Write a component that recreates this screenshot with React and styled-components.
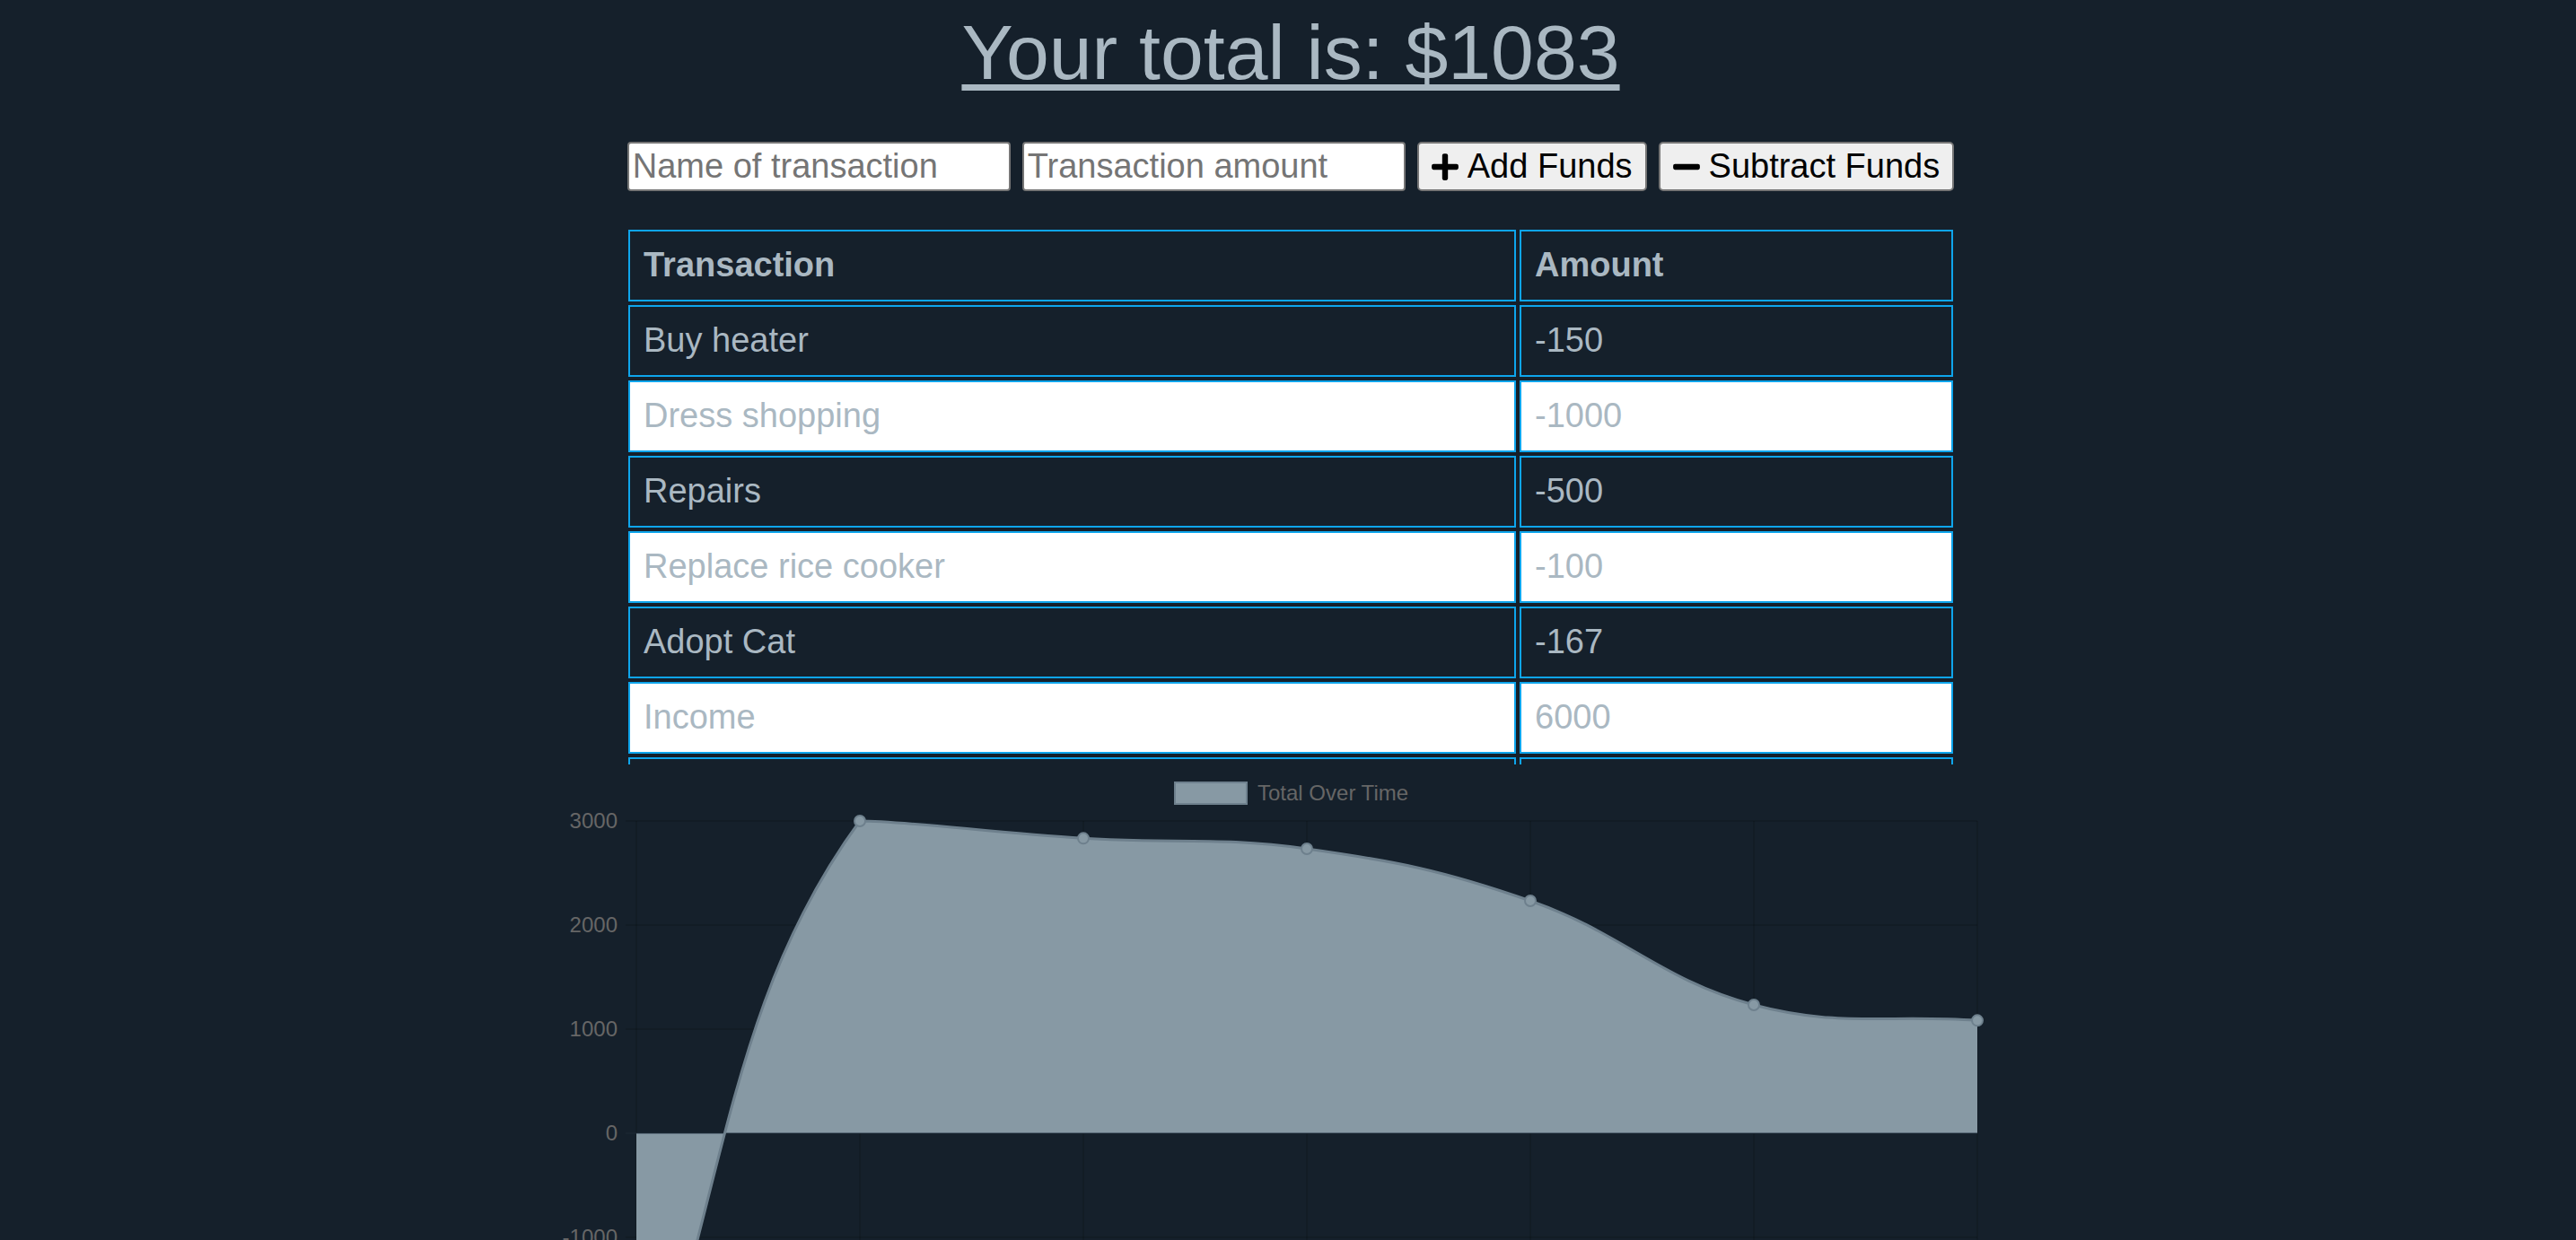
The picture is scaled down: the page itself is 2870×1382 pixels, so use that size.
import React from "react";
import styled, { createGlobalStyle } from "styled-components";
import { FaPlus, FaMinus } from "react-icons/fa";

const GlobalStyle = createGlobalStyle`
  html, body {
    margin: 0;
    padding: 0;
    background: #15202b;
    overflow: hidden;
    font-family: "Liberation Sans", Arial, Helvetica, sans-serif;
  }
`;

const Page = styled.div`
  display: flex;
  flex-direction: column;
  align-items: center;
  padding-left: 6px;
  box-sizing: border-box;
  width: 100%;
`;

const Title = styled.h1`
  margin: 0;
  padding-top: 8px;
  font-size: 86px;
  line-height: 100px;
  font-weight: normal;
  color: #aab8c2;
  text-decoration: underline;
  text-decoration-thickness: 7px;
  text-underline-offset: 6px;
`;

const Form = styled.div`
  display: flex;
  gap: 13px;
  margin-top: 50px;
`;

const Input = styled.input`
  box-sizing: border-box;
  width: 427px;
  height: 55px;
  margin: 0;
  padding: 0 4px;
  border: 2px solid #767676;
  border-radius: 4px;
  background: #ffffff;
  font-family: "Liberation Sans", Arial, sans-serif;
  font-size: 38px;
  color: #000;
  outline: none;
  &::placeholder {
    color: #757575;
  }
`;

const Button = styled.button`
  box-sizing: border-box;
  height: 55px;
  margin: 0;
  padding: 0 14px;
  display: flex;
  align-items: center;
  gap: 10px;
  border: 2px solid #767676;
  border-radius: 5px;
  background: #efefef;
  color: #000;
  font-family: "Liberation Sans", Arial, sans-serif;
  font-size: 38px;
  cursor: pointer;
  svg {
    width: 30px;
    height: 34px;
    flex: none;
  }
`;

const TableScroll = styled.div`
  margin-top: 39px;
  width: 1484px;
  height: 600px;
  overflow: hidden;
`;

const Grid = styled.div`
  display: grid;
  grid-template-columns: 989px 483px;
  gap: 4px;
  padding: 4px;
`;

const Cell = styled.div`
  box-sizing: border-box;
  height: 80px;
  padding: 15px 15px 17px;
  border: 2px solid #0ea5ec;
  background: ${(p) => (p.$light ? "#ffffff" : "#15202b")};
  color: #aab8c2;
  font-size: 38px;
  line-height: 44px;
  font-weight: ${(p) => (p.$head ? "bold" : "normal")};
  white-space: nowrap;
  overflow: hidden;
`;

const ChartBox = styled.div`
  width: 1630px;
  height: 800px;
  flex: none;
  svg {
    display: block;
  }
`;

const rows = [
  ["Buy heater", "-150"],
  ["Dress shopping", "-1000"],
  ["Repairs", "-500"],
  ["Replace rice cooker", "-100"],
  ["Adopt Cat", "-167"],
  ["Income", "6000"],
  ["Rent", "-3000"],
];

const perUnit = 0.116;
const top = 63;
const zeroY = top + 3000 * perUnit;
const area = { left: 86, right: 1580, top, bottom: zeroY + 3000 * perUnit };
const values = [-3000, 3000, 2833, 2733, 2233, 1233, 1083];
const ticks = [3000, 2000, 1000, 0, -1000, -2000, -3000];

const clamp = (v, a, b) => Math.max(a, Math.min(b, v));

function buildPath(pts, t = 0.4) {
  const cps = pts.map((p, i) => {
    const prev = pts[i - 1] || p;
    const next = pts[i + 1] || p;
    const d01 = Math.hypot(p.x - prev.x, p.y - prev.y);
    const d12 = Math.hypot(next.x - p.x, next.y - p.y);
    let s01 = d01 / (d01 + d12);
    let s12 = d12 / (d01 + d12);
    if (isNaN(s01)) s01 = 0;
    if (isNaN(s12)) s12 = 0;
    const fa = t * s01;
    const fb = t * s12;
    return {
      px: clamp(p.x - fa * (next.x - prev.x), area.left, area.right),
      py: clamp(p.y - fa * (next.y - prev.y), area.top, area.bottom),
      nx: clamp(p.x + fb * (next.x - prev.x), area.left, area.right),
      ny: clamp(p.y + fb * (next.y - prev.y), area.top, area.bottom),
    };
  });
  let d = `M${pts[0].x},${pts[0].y}`;
  for (let i = 1; i < pts.length; i++) {
    d += ` C${cps[i - 1].nx},${cps[i - 1].ny} ${cps[i].px},${cps[i].py} ${pts[i].x},${pts[i].y}`;
  }
  return d;
}

function Chart() {
  const step = (area.right - area.left) / (values.length - 1);
  const pts = values.map((v, i) => ({ x: area.left + i * step, y: zeroY - v * perUnit }));
  const line = buildPath(pts);
  const fill = `${line} L${pts[pts.length - 1].x},${zeroY} L${pts[0].x},${zeroY} Z`;
  const fillColor = "#8799a4";
  const strokeColor = "#6e808d";
  return (
    <svg width="1630" height="800" viewBox="0 0 1630 800">
      <rect x="686" y="20" width="80" height="24" fill={fillColor} stroke={strokeColor} strokeWidth="2" />
      <text x="778" y="40" fontSize="24" fill="#666" fontFamily="Liberation Sans, Arial, sans-serif">
        Total Over Time
      </text>
      {pts.map((p, i) => (
        <line key={"v" + i} x1={p.x} x2={p.x} y1={area.top} y2={area.bottom + 12} stroke="rgba(0,0,0,0.12)" strokeWidth="2" />
      ))}
      {ticks.map((v) => {
        const y = zeroY - v * perUnit;
        return (
          <g key={"t" + v}>
            <line x1={area.left - 12} x2={area.right} y1={y} y2={y} stroke={v === 0 ? "rgba(0,0,0,0.3)" : "rgba(0,0,0,0.12)"} strokeWidth="2" />
            <text x="65" y={y + 8} fontSize="24" fill="#666" textAnchor="end" fontFamily="Liberation Sans, Arial, sans-serif">
              {v}
            </text>
          </g>
        );
      })}
      <path d={fill} fill={fillColor} />
      <line x1={area.left - 12} x2={area.right} y1={zeroY} y2={zeroY} stroke="rgba(40,55,70,0.45)" strokeWidth="2" />
      <path d={line} fill="none" stroke={strokeColor} strokeWidth="3" />
      {pts.map((p, i) => (
        <circle key={"p" + i} cx={p.x} cy={p.y} r="6" fill={fillColor} stroke={strokeColor} strokeWidth="2" />
      ))}
    </svg>
  );
}

export default function App() {
  return (
    <>
      <GlobalStyle />
      <Page>
        <Title>Your total is: $1083</Title>
        <Form>
          <Input type="text" placeholder="Name of transaction" />
          <Input type="number" placeholder="Transaction amount" />
          <Button>
            <FaPlus />
            Add Funds
          </Button>
          <Button>
            <FaMinus />
            Subtract Funds
          </Button>
        </Form>
        <TableScroll>
          <Grid>
            <Cell $head>Transaction</Cell>
            <Cell $head>Amount</Cell>
            {rows.map(([name, amt], i) => (
              <React.Fragment key={name}>
                <Cell $light={i % 2 === 1}>{name}</Cell>
                <Cell $light={i % 2 === 1}>{amt}</Cell>
              </React.Fragment>
            ))}
          </Grid>
        </TableScroll>
        <ChartBox>
          <Chart />
        </ChartBox>
      </Page>
    </>
  );
}
